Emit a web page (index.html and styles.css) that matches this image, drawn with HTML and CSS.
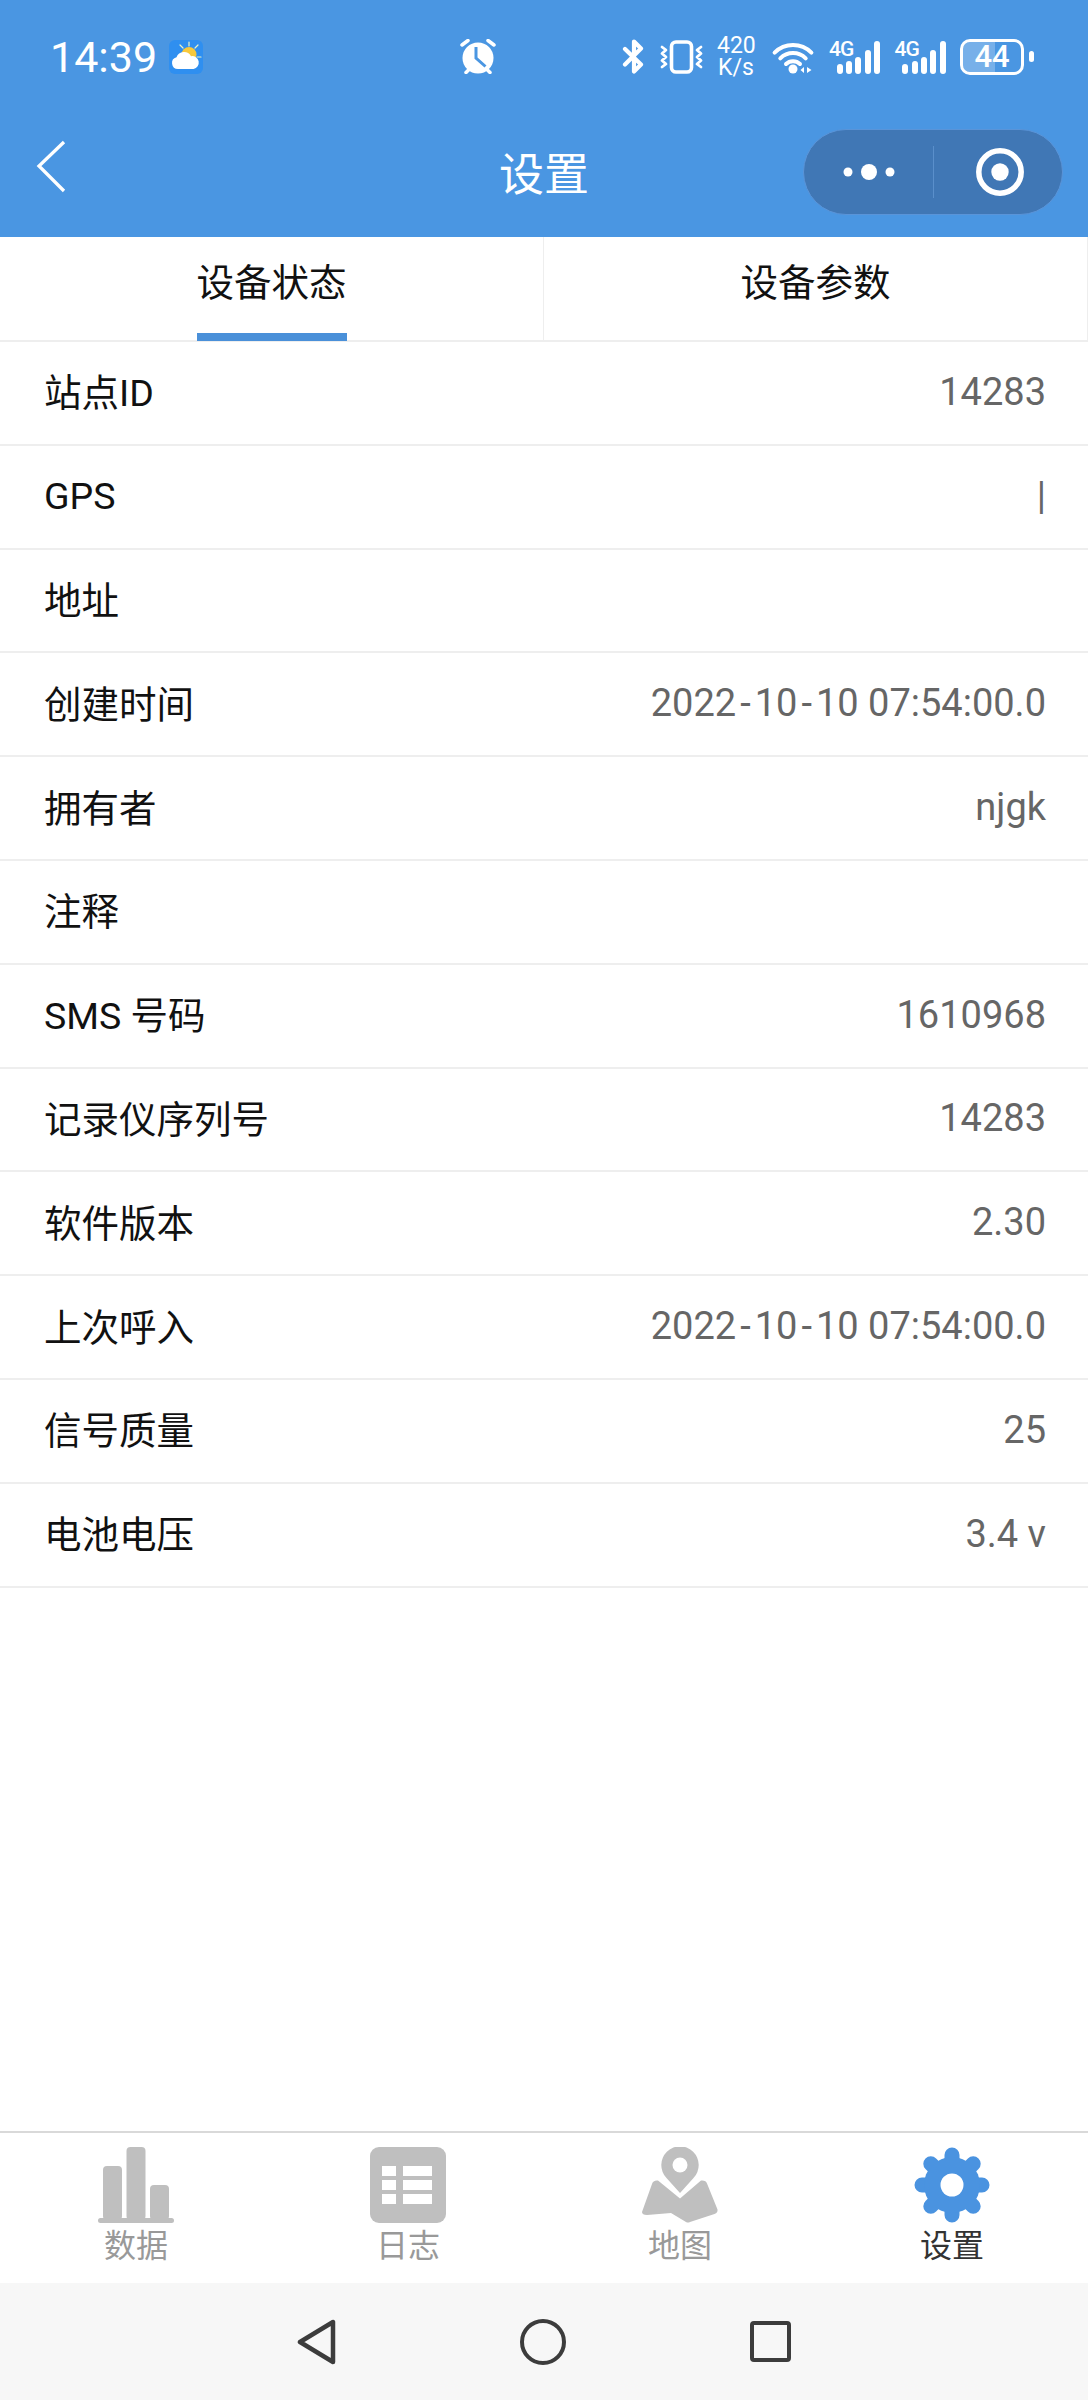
FILE: index.html
```html
<!DOCTYPE html>
<html lang="zh-CN">

<head>
    <meta charset="UTF-8">
    <title>设置</title>
    <link rel="stylesheet" href="styles.css">
</head>

<body>
    <div class="page">
        <!-- barra de status + titulo -->
        <header class="header">
            <div class="status">
                <div class="status-left">
                    <span class="time">14:39</span>
                    <svg class="weather" viewBox="0 0 34 34">
                        <rect width="34" height="34" rx="6" fill="#2f8ff0" />
                        <g stroke="#e8f2c8" stroke-width="1.200" stroke-linecap="round">
                            <path d="M20 2v4M11 5l3 3M29 5l-3 3M32 17h-4" />
                        </g>
                        <circle cx="20" cy="14.500" r="7.500" fill="#f8c93c" />
                        <path d="M9 29a6 6 0 0 1-1.500-11.800 8 8 0 0 1 14.500-1 6.500 6.500 0 0 1 2.500 12.800z" fill="#fff" />
                    </svg>
                </div>
                <svg class="alarm" viewBox="0 0 36 35">
                    <circle cx="18" cy="19" r="15.500" fill="#fff" />
                    <path d="M16 8v11l9.500 8.500" fill="none" stroke="#4a96e2" stroke-width="3" />
                    <path d="M2 6l6-4.500M34 6l-6-4.500M6 33.500l3-3M30 33.500l-3-3" stroke="#fff" stroke-width="3.500" stroke-linecap="round" fill="none" />
                </svg>
                <div class="status-right">
                    <svg class="ic-bt" viewBox="0 0 23 35">
                        <path d="M3 10l16 15.500-7 7V2.500l7 7L3 25.500" fill="none" stroke="#fff" stroke-width="4.200" stroke-linecap="round" stroke-linejoin="round" />
                    </svg>
                    <svg class="ic-vib" viewBox="0 0 43 35">
                        <rect x="11.500" y="3" width="20" height="30" rx="4.500" fill="none" stroke="#fff" stroke-width="3.600" />
                        <path d="M2 8l4 3-4 3.500 4 3.500-4 3.500 4 3.500-4 3M41 8l-4 3 4 3.500-4 3.500 4 3.500-4 3.500 4 3" fill="none" stroke="#fff" stroke-width="2.800" stroke-linecap="round" stroke-linejoin="round" />
                    </svg>
                    <div class="speed">420<br>K/s</div>
                    <svg class="ic-wifi" viewBox="0 0 45 35">
                        <path d="M4.600 13.600a26 26 0 0 1 36.800 0M10.300 19.300a18 18 0 0 1 25.400 0M16 25a10 10 0 0 1 14 0" fill="none" stroke="#fff" stroke-width="4" stroke-linecap="round" />
                        <circle cx="23" cy="30" r="4.500" fill="#fff" />
                        <path d="M34 28v6l-3.500-3zM37 28v6l4.500-3z" fill="#fff" />
                    </svg>
                    <div class="signal">
                        <span class="sig-label">4G</span>
                        <i class="bar b1"></i><i class="bar b2"></i><i class="bar b3"></i><i class="bar b4"></i><i class="bar b5"></i>
                    </div>
                    <div class="signal">
                        <span class="sig-label">4G</span>
                        <i class="bar b1"></i><i class="bar b2"></i><i class="bar b3"></i><i class="bar b4"></i><i class="bar b5"></i>
                    </div>
                    <div class="battery">
                        <div class="battery-body"><span class="battery-fill"></span><span class="battery-num">44</span></div>
                        <span class="battery-tip"></span>
                    </div>
                </div>
            </div>
            <div class="navbar">
                <svg class="back" viewBox="0 0 30 54">
                    <path d="M28 2L3 26l25 25" fill="none" stroke="#fff" stroke-width="3.300" />
                </svg>
                <h1 class="title">设置</h1>
                <div class="capsule">
                    <div class="capsule-part">
                        <svg class="dots" viewBox="0 0 52 18">
                            <circle cx="5" cy="9" r="4.500" fill="#fff" />
                            <circle cx="26" cy="9" r="8" fill="#fff" />
                            <circle cx="47" cy="9" r="4.500" fill="#fff" />
                        </svg>
                    </div>
                    <div class="capsule-part capsule-right">
                        <svg class="target" viewBox="0 0 48 48">
                            <circle cx="24" cy="24" r="21.200" fill="none" stroke="#fff" stroke-width="5.500" />
                            <circle cx="24" cy="24" r="8.700" fill="#fff" />
                        </svg>
                    </div>
                </div>
            </div>
        </header>

        <div class="tabs">
            <div class="tab tab-on"><span class="tab-text">设备状态</span></div>
            <div class="tab"><span class="tab-text">设备参数</span></div>
        </div>

        <!-- lista de dados -->
        <main class="list">
            <div class="row"><span class="lab">站点ID</span><span class="val">14283</span></div>
            <div class="row"><span>GPS</span><span class="val">|</span></div>
            <div class="row"><span class="lab">地址</span><span class="val"></span></div>
            <div class="row"><span class="lab">创建时间</span><span class="val">2022<span class="dash">-</span>10<span class="dash">-</span>10 07:54:00.0</span></div>
            <div class="row"><span class="lab">拥有者</span><span class="val">njgk</span></div>
            <div class="row"><span class="lab">注释</span><span class="val"></span></div>
            <div class="row"><span class="lab">SMS 号码</span><span class="val">1610968</span></div>
            <div class="row"><span class="lab">记录仪序列号</span><span class="val">14283</span></div>
            <div class="row"><span class="lab">软件版本</span><span class="val">2.30</span></div>
            <div class="row"><span class="lab">上次呼入</span><span class="val">2022<span class="dash">-</span>10<span class="dash">-</span>10 07:54:00.0</span></div>
            <div class="row"><span class="lab">信号质量</span><span class="val">25</span></div>
            <div class="row"><span class="lab">电池电压</span><span class="val">3.4 v</span></div>
        </main>

        <nav class="tabbar">
            <div class="tabbar-item">
                <svg class="tabbar-icon" viewBox="0 0 76 76">
                    <rect x="5" y="19" width="19" height="54" rx="4" fill="#bfbfbf" />
                    <rect x="28.500" y="0" width="19" height="73" rx="4" fill="#bfbfbf" />
                    <rect x="52" y="38" width="19" height="35" rx="4" fill="#bfbfbf" />
                    <rect x="0" y="71" width="76" height="5" rx="2.500" fill="#bfbfbf" />
                </svg>
                <span>数据</span>
            </div>
            <div class="tabbar-item">
                <svg class="tabbar-icon" viewBox="0 0 76 76">
                    <rect width="76" height="76" rx="9" fill="#bfbfbf" />
                    <g fill="#fff">
                        <rect x="12" y="19" width="14" height="10" />
                        <rect x="33" y="19" width="29" height="10" />
                        <rect x="12" y="33" width="14" height="10" />
                        <rect x="33" y="33" width="29" height="10" />
                        <rect x="12" y="47" width="14" height="10" />
                        <rect x="33" y="47" width="29" height="10" />
                    </g>
                </svg>
                <span>日志</span>
            </div>
            <div class="tabbar-item">
                <svg class="tabbar-icon" viewBox="0 0 76 76">
                    <path d="M38 46L24.500 31A18.700 18.700 0 1 1 51.500 31z" fill="#bfbfbf" />
                    <circle cx="38" cy="18" r="7.500" fill="#fff" />
                    <path d="M10 37q1-4 6-3.500l22 18 21-18q5-.5 6 3l10.500 26q.5 3-3 4.500L48 75q-2 1-4 0l-15-9-24 2q-5 0-5-3z" fill="#bfbfbf" />
                </svg>
                <span>地图</span>
            </div>
            <div class="tabbar-item tabbar-on">
                <svg class="tabbar-icon" viewBox="0 0 76 76">
                    <g stroke="#4a93e0" stroke-width="15" stroke-linecap="round">
                        <path d="M38 8v60M8 38h60M16.800 16.800l42.400 42.400M59.200 16.800L16.800 59.200" />
                    </g>
                    <circle cx="38" cy="38" r="28" fill="#4a93e0" />
                    <circle cx="38" cy="38" r="11.500" fill="#fff" />
                </svg>
                <span>设置</span>
            </div>
        </nav>

        <div class="sysnav">
            <svg class="nav-back" viewBox="0 0 39 46">
                <path d="M3 23L36 3v40z" fill="none" stroke="#3c3c3c" stroke-width="4.500" stroke-linejoin="round" />
            </svg>
            <span class="nav-home"></span>
            <span class="nav-recent"></span>
        </div>
    </div>
</body>

</html>
```

FILE: styles.css
```css
* {
    box-sizing: border-box;
}

html,
body {
    margin: 0;
    padding: 0;
}

body {
    background: #fff;
    font-family: Roboto, "Noto Sans CJK SC", sans-serif;
}

.page {
    width: 1088px;
    height: 2400px;
    display: flex;
    flex-direction: column;
}

/* topo */
.header {
    height: 237px;
    background: #4a96e2;
    color: #fff;
}

.status {
    height: 113px;
    display: flex;
    align-items: center;
    padding-right: 54px;
}

.status-left {
    width: 460px;
    padding-left: 50px;
    display: flex;
    align-items: center;
}

.time {
    font-size: 43px;
    line-height: 50px;
}

.weather {
    width: 34px;
    height: 34px;
    margin-left: 12px;
}

.alarm {
    width: 36px;
    height: 35px;
}

.status-right {
    margin-left: auto;
    display: flex;
    align-items: center;
    gap: 14.5px;
}

.ic-bt {
    width: 23px;
    height: 35px;
}

.ic-vib {
    width: 43px;
    height: 35px;
}

.speed {
    width: 38px;
    text-align: center;
    font-size: 23px;
    line-height: 22px;
    white-space: nowrap;
}

.ic-wifi {
    width: 45px;
    height: 35px;
}

.signal {
    position: relative;
    width: 51px;
    height: 35px;
    display: flex;
    align-items: flex-end;
    justify-content: flex-end;
    gap: 3.3px;
}

.sig-label {
    position: absolute;
    left: 0;
    top: 0;
    font-size: 21px;
    line-height: 20px;
    font-weight: 500;
    letter-spacing: -1px;
}

.bar {
    width: 6px;
    background: #fff;
    border-radius: 3px;
}

.b1 {
    height: 10px;
}

.b2 {
    height: 13px;
}

.b3 {
    height: 17px;
}

.b4 {
    height: 24px;
}

.b5 {
    height: 33px;
}

.battery {
    width: 74px;
    display: flex;
    align-items: center;
    gap: 5px;
}

.battery-body {
    position: relative;
    width: 64px;
    height: 36px;
    border: 3px solid #fff;
    border-radius: 10px;
    display: flex;
    align-items: center;
    justify-content: center;
    overflow: hidden;
}

.battery-fill {
    position: absolute;
    left: 0;
    top: 0;
    bottom: 0;
    width: 55%;
    background: rgba(255, 255, 255, .25);
}

.battery-num {
    position: relative;
    font-size: 31px;
    font-weight: 500;
    line-height: 30px;
}

.battery-tip {
    width: 5px;
    height: 11px;
    background: #fff;
    border-radius: 2.5px;
}

.navbar {
    height: 124px;
    position: relative;
    display: flex;
    align-items: center;
    justify-content: center;
}

.back {
    position: absolute;
    left: 36px;
    top: 27px;
    width: 30px;
    height: 54px;
}

.title {
    margin: 0 0 6px;
    font-size: 45px;
    font-weight: 400;
    line-height: 60px;
    font-family: "Noto Sans CJK SC", sans-serif;
}

.capsule {
    position: absolute;
    left: 803px;
    top: 16px;
    width: 260px;
    height: 86px;
    background: #4077b5;
    border: 1px solid #5a94d8;
    border-radius: 43px;
    display: flex;
    align-items: center;
}

.capsule-part {
    width: 130px;
    height: 52px;
    display: flex;
    align-items: center;
    justify-content: center;
}

.capsule-right {
    border-left: 1px solid #5a8fcb;
}

.dots {
    width: 52px;
    height: 18px;
    margin-left: 1px;
}

.target {
    width: 48px;
    height: 48px;
    margin-left: 4px;
}

/* abas */
.tabs {
    height: 105px;
    display: flex;
    border-bottom: 2px solid #eee;
}

.tab {
    position: relative;
    width: 544px;
    text-align: center;
    border-right: 1px solid #eee;
    font-size: 37.5px;
    color: #111;
    padding-top: 17px;
    line-height: 52px;
    font-family: "Noto Sans CJK SC", sans-serif;
}

.tab-text {
    display: inline-block;
    height: 87px;
}

.tab-on .tab-text {
    border-bottom: 8px solid #4a90d9;
    width: 150px;
}

/* linhas */
.list {
    flex: 1;
}

.row {
    height: 103.800px;
    display: flex;
    align-items: center;
    justify-content: space-between;
    padding: 0 42px 2px 44px;
    border-bottom: 2px solid #eee;
    font-size: 37.5px;
    color: #111;
}

.lab {
    margin-bottom: 4px;
}

.val {
    color: #666;
    font-size: 38px;
}

.dash {
    padding: 0 4px;
}

/* barra inferior */
.tabbar {
    height: 152px;
    border-top: 2px solid #d9d9d9;
    display: grid;
    grid-template-columns: repeat(4, 272px);
    padding-top: 14px;
}

.tabbar-item {
    display: flex;
    flex-direction: column;
    align-items: center;
    font-size: 32px;
    line-height: 41px;
    color: #999;
    font-family: "Noto Sans CJK SC", sans-serif;
}

.tabbar-on {
    color: #333;
}

.tabbar-icon {
    width: 76px;
    height: 76px;
    flex: none;
}

.sysnav {
    height: 117px;
    background: #f7f7f7;
    display: flex;
    align-items: center;
    justify-content: center;
    gap: 184px;
}

.nav-back {
    width: 39px;
    height: 46px;
}

.nav-home {
    width: 46px;
    height: 46px;
    border: 4.500px solid #3c3c3c;
    border-radius: 50%;
}

.nav-recent {
    width: 41px;
    height: 41px;
    border: 4.500px solid #3c3c3c;
    border-radius: 4px;
}
```
